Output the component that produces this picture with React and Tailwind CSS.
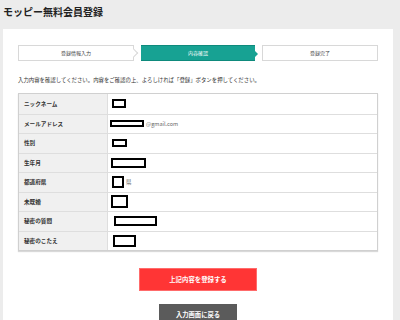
import React from "react";

const rows = [
  { label: "ニックネーム", box: [14, 9], ml: 4 },
  { label: "メールアドレス", box: [34, 7], ml: 2, after: "@gmail.com" },
  { label: "性別", box: [15, 8], ml: 4 },
  { label: "生年月", box: [35, 10], ml: 3 },
  { label: "都道府県", box: [12, 12], ml: 4, after: "県" },
  { label: "未既婚", box: [17, 13], ml: 3 },
  { label: "秘密の質問", box: [43, 10], ml: 6 },
  { label: "秘密のこたえ", box: [23, 12], ml: 5 },
];

export default function App() {
  return (
    <div
      className="w-[400px] h-[320px] overflow-hidden bg-[#ececec]"
      style={{ fontFamily: '"Noto Sans CJK JP", "Noto Sans", sans-serif' }}
    >
      <div className="pl-[3px] pt-[5px] h-[29px] text-[10px] leading-[14px] font-bold text-[#222]">
        モッピー無料会員登録
      </div>
      <div className="ml-[3px] w-[390px] h-[300px] bg-white px-[15px] pt-[16px]">
        {/* steps */}
        <div className="flex gap-[7px] h-[16px]">
          <div className="relative flex-1 border border-[#d8d8d8] bg-white flex items-center justify-center text-[5px] text-[#444]">
            登録情報入力
            <div className="absolute right-[-4px] top-[4px] w-[6px] h-[6px] rotate-45 bg-white border-t border-r border-[#d8d8d8]" />
          </div>
          <div className="relative w-[114px] bg-[#17a293] border-y border-[#0e8a7c] flex items-center justify-center text-[5px] text-white">
            内容確認
            <div className="absolute right-[-3px] top-[5px] w-0 h-0 border-y-[3px] border-y-transparent border-l-[3px] border-l-[#17a293]" />
          </div>
          <div className="flex-1 border border-[#d8d8d8] bg-white flex items-center justify-center text-[5px] text-[#444]">
            登録完了
          </div>
        </div>
        {/* instruction */}
        <div className="mt-[16px] text-[5.4px] leading-[7px] text-[#333] whitespace-nowrap">
          入力内容を確認してください。内容をご確認の上、よろしければ「登録」ボタンを押してください。
        </div>
        {/* table */}
        <div className="mt-[9px] border border-[#d0d0d0] shadow-[0_1px_1px_rgba(0,0,0,0.15)]">
          {rows.map((r, i) => (
            <div
              key={i}
              className={`flex h-[19.5px] ${i > 0 ? "border-t border-[#dedede]" : ""}`}
            >
              <div className="w-[89px] bg-[#f0f0f0] border-r border-[#dedede] flex items-center pl-[5px] text-[5.6px] font-bold text-[#333]">
                {r.label}
              </div>
              <div className="flex-1 flex items-center">
                <div
                  className="border-2 border-black bg-white"
                  style={{ width: r.box[0], height: r.box[1], marginLeft: r.ml }}
                />
                {r.after && (
                  <span className="ml-[2px] text-[5.5px] text-[#666]">{r.after}</span>
                )}
              </div>
            </div>
          ))}
        </div>
        {/* buttons */}
        <div className="flex flex-col items-center mt-[17px]">
          <div className="w-[118px] h-[23px] bg-[#ff3535] border border-[#ff6b6b] flex items-center justify-center text-[6.4px] font-bold text-white">
            上記内容を登録する
          </div>
          <div className="mt-[13px] w-[78px] h-[22px] bg-[#5b5b5b] flex items-center justify-center text-[6.3px] font-bold text-white">
            入力画面に戻る
          </div>
        </div>
      </div>
    </div>
  );
}
